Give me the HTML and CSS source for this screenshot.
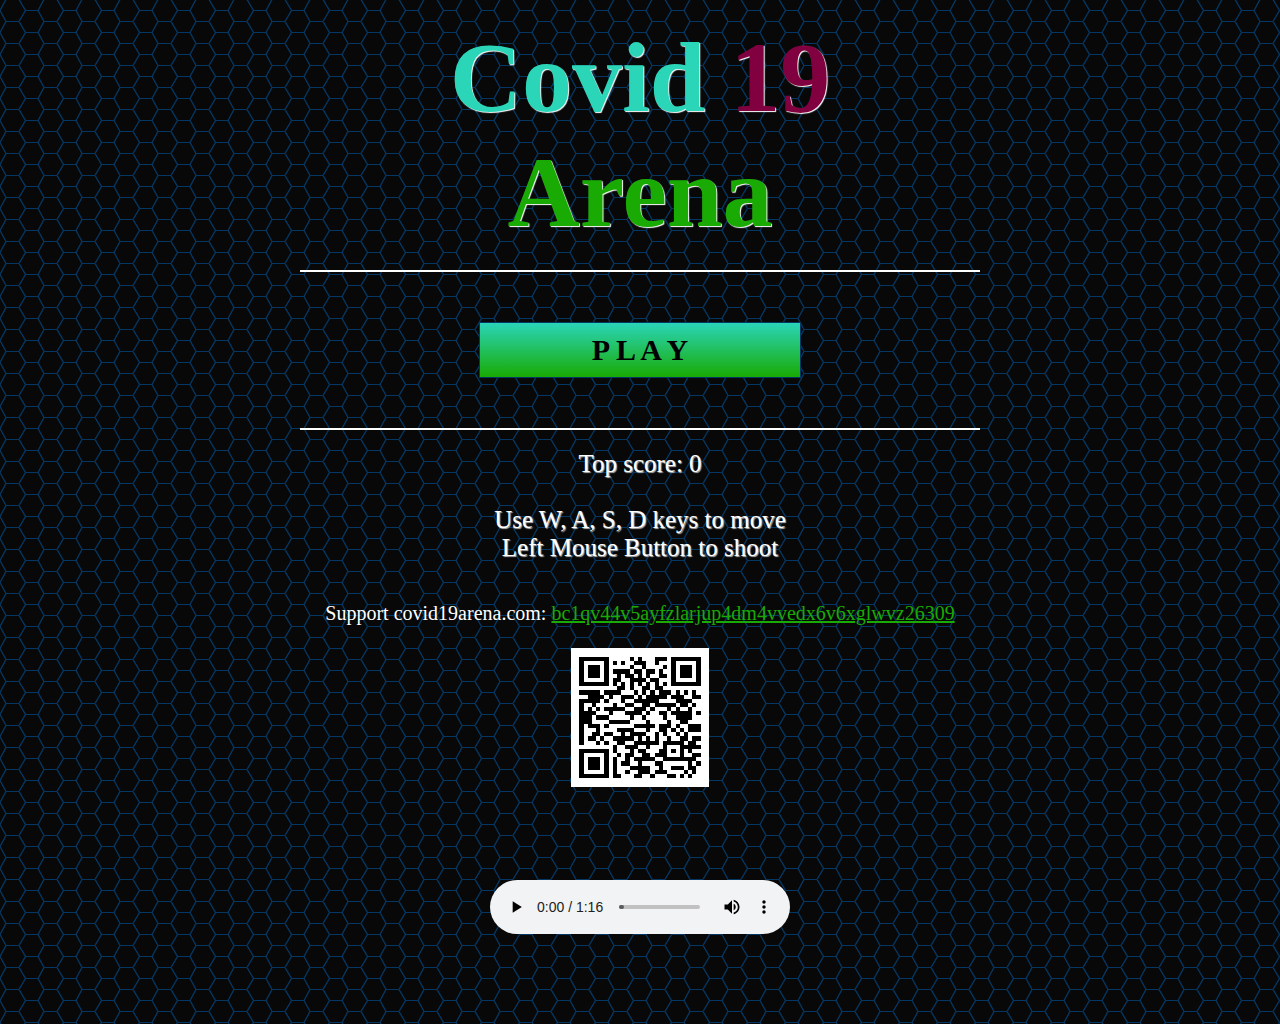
FILE: index.html
```
<!DOCTYPE html>
<html lang="en">
<head>
<meta charset="utf-8">
<title>Covid 19 Arena</title>
<link rel="stylesheet" href="styles.css">
</head>
<body>
<main class="menu">
  <h1 class="title"><span class="title-covid">Covid</span> <span class="title-number">19</span><br><span class="title-arena">Arena</span></h1>
  <section class="start">
    <button class="play" type="button">P L A Y</button>
  </section>
  <div class="info">
    <p>Top score: 0</p>
    <p>Use W, A, S, D keys to move<br>Left Mouse Button to shoot</p>
  </div>
  <p class="support">Support covid19arena.com: <a id="wallet" href="bitcoin:bc1qv44v5ayfzlarjup4dm4vvedx6v6xglwvz26309">bc1qv44v5ayfzlarjup4dm4vvedx6v6xglwvz26309</a></p>
  <svg class="qr" viewBox="-2 -2 33 33" role="img" aria-label="Wallet QR code" shape-rendering="crispEdges"><path id="qr-modules"></path></svg>
  <div class="player" role="group" aria-label="Music">
    <button class="player-button" type="button" aria-label="Play music"><svg viewBox="0 0 24 24"><path d="M8 5v14l11-7z"/></svg></button>
    <span class="player-time">0:00 / 1:16</span>
    <input class="player-seek" type="range" min="0" max="76" value="0" aria-label="Seek">
    <button class="player-button player-volume" type="button" aria-label="Mute"><svg viewBox="0 0 24 24"><path d="M3 9v6h4l5 5V4L7 9H3zm13.500 3c0-1.770-1.020-3.290-2.500-4.030v8.050c1.480-.73 2.500-2.250 2.500-4.020zM14 3.230v2.060c2.890.86 5 3.540 5 6.710s-2.110 5.850-5 6.710v2.060c4.010-.91 7-4.490 7-8.770s-2.990-7.860-7-8.770z"/></svg></button>
    <button class="player-button" type="button" aria-label="More options"><svg viewBox="0 0 24 24"><path d="M12 8c1.100 0 2-.9 2-2s-.9-2-2-2-2 .9-2 2 .9 2 2 2zm0 2c-1.100 0-2 .9-2 2s.9 2 2 2 2-.9 2-2-.9-2-2-2zm0 6c-1.100 0-2 .9-2 2s.9 2 2 2 2-.9 2-2-.9-2-2-2z"/></svg></button>
  </div>
</main>
<script src="qr.js"></script>
</body>
</html>
```
FILE: styles.css
```
* {
  box-sizing: border-box;
}

body {
  margin: 0;
  min-height: 100vh;
  color: #fff;
  font-family: "Liberation Serif", "Times New Roman", serif;
  background: #080808 url("data:image/svg+xml,%3Csvg xmlns='http://www.w3.org/2000/svg' width='38' height='22'%3E%3Cg fill='none' stroke='%23043764'%3E%3Cpath d='M6 21.500H19M25 10.500H38'/%3E%3Cpath stroke-width='1.300' d='M0 10.500L6 21.500L6.500 22.500M19 21.500L25.500 10.500L19 -.5M0 10.500L6 -.5M38 10.500L44 -.5M38 10.500L44 21.500'/%3E%3C/g%3E%3C/svg%3E");
}

.menu {
  display: flex;
  flex-direction: column;
  align-items: center;
  max-width: 680px;
  margin: 0 auto;
  padding: 20px 0 90px;
  text-align: center;
}

.title {
  margin: 0 0 20px;
  font-size: 100px;
  line-height: 115px;
  text-shadow: 1px 1px 1px #fff;
}

.title-covid { color: #2ad5b8; }
.title-number { color: #800040; }
.title-arena { color: #19aa04; }

.start {
  width: 100%;
  padding: 50px 0;
  border: solid #fff;
  border-width: 2px 0;
}

.play {
  width: 322px;
  max-width: 100%;
  height: 56px;
  border: 1px solid #043764;
  background: linear-gradient(#2ad5b8, #19aa04);
  color: #000;
  font: bold 30px "Liberation Serif", "Times New Roman", serif;
}

.info {
  display: grid;
  gap: 28px;
  margin-top: 20px;
  font-size: 25px;
  line-height: 28px;
  text-shadow: 1px 1px 1px #bbb;
}

.info p {
  margin: 0;
}

.support {
  margin: 40px 0 23px;
  font-size: 20px;
  line-height: 23px;
}

.support a {
  color: #19aa04;
}

.qr {
  width: 138px;
  height: 139px;
  background: #fff;
}

.player {
  display: flex;
  align-items: center;
  width: 300px;
  height: 54px;
  margin-top: 93px;
  padding: 0 10px;
  border-radius: 27px;
  background: #f1f3f4;
  color: #222;
  font: 14px "Liberation Sans", Arial, sans-serif;
}

.player-button {
  display: grid;
  place-items: center;
  width: 32px;
  height: 32px;
  padding: 0;
  border: 0;
  background: none;
}

.player-button svg {
  width: 20px;
  height: 20px;
}

.player-time {
  margin: 0 16px 0 5px;
}

.player-seek {
  flex: 1;
  min-width: 0;
  height: 4px;
  margin: 0;
  border-radius: 2px;
  background: #c1c1c2;
  appearance: none;
}

.player-seek::-webkit-slider-thumb {
  width: 5px;
  height: 4px;
  border-radius: 2px;
  background: #5b5b5c;
  appearance: none;
}

.player-volume {
  margin-left: 16px;
}
```
FILE: qr.js
```
// Draws a version 3, level L QR code (29 x 29 modules, mask 2) of the given text.
function qrPath(text) {
  const size = 29;
  const bits = [];
  const push = (value, length) => {
    for (let i = length - 1; i >= 0; i--) bits.push((value >> i) & 1);
  };
  push(4, 4);
  push(text.length, 8);
  for (const c of text) push(c.charCodeAt(0), 8);
  push(0, 4);
  while (bits.length % 8) bits.push(0);
  const data = [];
  for (let i = 0; i < bits.length; i += 8) data.push(parseInt(bits.slice(i, i + 8).join(""), 2));
  for (let pad = 0xec; data.length < 55; pad ^= 0xec ^ 0x11) data.push(pad);

  // Reed-Solomon remainder over GF(256)
  const mul = (a, b) => {
    let r = 0;
    for (let i = 7; i >= 0; i--) {
      r = (r << 1) ^ ((r >> 7) * 0x11d);
      r ^= ((b >> i) & 1) * a;
    }
    return r;
  };
  const divisor = Array(15).fill(0);
  divisor[14] = 1;
  let root = 1;
  for (let i = 0; i < 15; i++) {
    for (let j = 0; j < 15; j++) {
      divisor[j] = mul(divisor[j], root);
      if (j + 1 < 15) divisor[j] ^= divisor[j + 1];
    }
    root = mul(root, 2);
  }
  const ecc = Array(15).fill(0);
  for (const b of data) {
    const factor = b ^ ecc.shift();
    ecc.push(0);
    divisor.forEach((c, i) => { ecc[i] ^= mul(c, factor); });
  }
  const words = data.concat(ecc);

  const grid = Array.from({ length: size }, () => Array(size).fill(null));
  const set = (x, y, v) => {
    if (x >= 0 && y >= 0 && x < size && y < size) grid[y][x] = v ? 1 : 0;
  };
  for (let i = 0; i < size; i++) {
    set(6, i, i % 2 === 0);
    set(i, 6, i % 2 === 0);
  }
  for (const [cx, cy] of [[3, 3], [size - 4, 3], [3, size - 4]]) {
    for (let dy = -4; dy <= 4; dy++) {
      for (let dx = -4; dx <= 4; dx++) {
        const d = Math.max(Math.abs(dx), Math.abs(dy));
        set(cx + dx, cy + dy, d !== 2 && d !== 4);
      }
    }
  }
  for (let dy = -2; dy <= 2; dy++) {
    for (let dx = -2; dx <= 2; dx++) set(22 + dx, 22 + dy, Math.max(Math.abs(dx), Math.abs(dy)) !== 1);
  }

  // Format bits, least significant first
  const format = [..."111110110101010"].reverse().map(Number);
  for (let i = 0; i <= 5; i++) set(8, i, format[i]);
  set(8, 7, format[6]);
  set(8, 8, format[7]);
  set(7, 8, format[8]);
  for (let i = 9; i < 15; i++) set(14 - i, 8, format[i]);
  for (let i = 0; i < 8; i++) set(size - 1 - i, 8, format[i]);
  for (let i = 8; i < 15; i++) set(8, size - 15 + i, format[i]);
  set(8, size - 8, 1);

  let n = 0;
  for (let right = size - 1; right >= 1; right -= 2) {
    if (right === 6) right = 5;
    const upward = ((right + 1) & 2) === 0;
    for (let step = 0; step < size; step++) {
      const y = upward ? size - 1 - step : step;
      for (const x of [right, right - 1]) {
        if (grid[y][x] !== null) continue;
        const bit = n < words.length * 8 ? (words[n >> 3] >> (7 - (n & 7))) & 1 : 0;
        grid[y][x] = bit ^ (x % 3 === 0 ? 1 : 0);
        n++;
      }
    }
  }
  let path = "";
  grid.forEach((row, y) => row.forEach((v, x) => {
    if (v) path += `M${x} ${y}h1v1h-1z`;
  }));
  return path;
}

document.getElementById("qr-modules").setAttribute("d", qrPath("bitcoin:" + document.getElementById("wallet").textContent));
```
